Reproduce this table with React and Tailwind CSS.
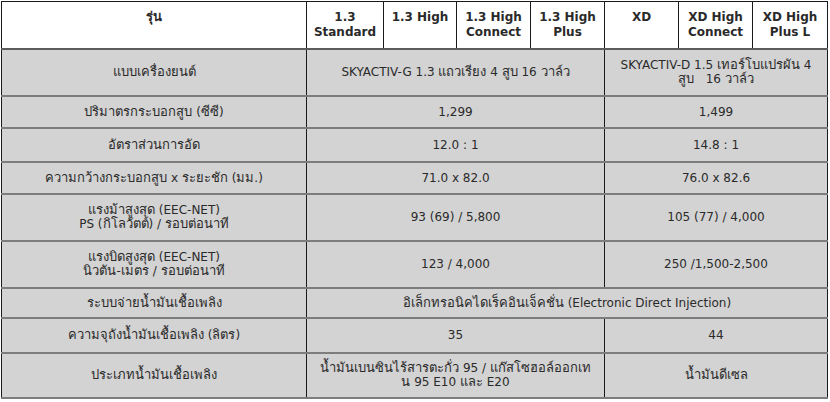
const models = [
  ["1.3", "Standard"],
  ["1.3 High"],
  ["1.3 High", "Connect"],
  ["1.3 High", "Plus"],
  ["XD"],
  ["XD High", "Connect"],
  ["XD High", "Plus L"],
];

const rows = [
  {
    label: ["แบบเครื่องยนต์"],
    h: "h-[47px]",
    g: ["SKYACTIV-G 1.3 แถวเรียง 4 สูบ 16 วาล์ว"],
    d: ["SKYACTIV-D 1.5 เทอร์โบแปรผัน 4", "สูบ\u00a0\u00a0 16 วาล์ว"],
  },
  { label: ["ปริมาตรกระบอกสูบ (ซีซี)"], h: "h-[32px]", g: ["1,299"], d: ["1,499"] },
  { label: ["อัตราส่วนการอัด"], h: "h-[34px]", g: ["12.0 : 1"], d: ["14.8 : 1"] },
  { label: ["ความกว้างกระบอกสูบ x ระยะชัก (มม.)"], h: "h-[32px]", g: ["71.0 x 82.0"], d: ["76.0 x 82.6"] },
  {
    label: ["แรงม้าสูงสุด (EEC-NET)", "PS (กิโลวัตต์) / รอบต่อนาที"],
    h: "h-[47px]",
    g: ["93 (69) / 5,800"],
    d: ["105 (77) / 4,000"],
  },
  {
    label: ["แรงบิดสูงสุด (EEC-NET)", "นิวตัน-เมตร / รอบต่อนาที"],
    h: "h-[47px]",
    g: ["123 / 4,000"],
    d: ["250 /1,500-2,500"],
  },
  {
    label: ["ระบบจ่ายน้ำมันเชื้อเพลิง"],
    h: "h-[30px]",
    all: ["อิเล็กทรอนิคไดเร็คอินเจ็คชั่น (Electronic Direct Injection)"],
  },
  { label: ["ความจุถังน้ำมันเชื้อเพลิง (ลิตร)"], h: "h-[35px]", g: ["35"], d: ["44"] },
  {
    label: ["ประเภทน้ำมันเชื้อเพลิง"],
    h: "h-[45px]",
    g: ["น้ำมันเบนซินไร้สารตะกั่ว 95 / แก๊สโซฮอล์ออกเท", "น 95 E10 และ E20"],
    d: ["น้ำมันดีเซล"],
  },
];

// Thai runs render in a smaller fallback face, so bump them up a bit
function Mixed({ text }) {
  const parts = text.split(/([\u0E00-\u0E7F]+)/);
  return parts.map((p, i) =>
    /[\u0E00-\u0E7F]/.test(p) ? (
      <span key={i} className="text-[13px] leading-[14px]">
        {p}
      </span>
    ) : (
      p
    )
  );
}

function Lines({ lines }) {
  return lines.map((l, i) => (
    <div key={i} className="whitespace-nowrap">
      <Mixed text={l} />
    </div>
  ));
}

const cell = "border-x border-x-[#1a1a1a] border-y-2 border-y-[#7d7d7d] text-center align-middle p-0";

export default function App() {
  return (
    <div className="w-[830px] h-[402px] bg-white pt-px pl-px">
      <table
        className="table-fixed border-collapse w-[826px] text-[12px] leading-[14px] text-[#2a2a2a]"
        style={{ fontFamily: '"DejaVu Sans", Tahoma, sans-serif' }}
      >
        <colgroup>
          <col className="w-[305px]" />
          <col className="w-[77px]" />
          <col className="w-[73px]" />
          <col className="w-[74px]" />
          <col className="w-[74px]" />
          <col className="w-[74px]" />
          <col className="w-[74px]" />
          <col className="w-[75px]" />
        </colgroup>
        <thead>
          <tr className="h-[47px] bg-white">
            <th className="border border-[#1a1a1a] border-b-2 border-b-[#5c5c5c] align-top pt-[8px] font-bold">
              <Mixed text="รุ่น" />
            </th>
            {models.map((m, i) => (
              <th
                key={i}
                className="border border-[#1a1a1a] border-b-2 border-b-[#5c5c5c] align-top pt-[8px] font-bold leading-[15px]"
              >
                <Lines lines={m} />
              </th>
            ))}
          </tr>
        </thead>
        <tbody className="bg-[#d3d3d3]">
          {rows.map((r, i) => (
            <tr key={i} className={r.h}>
              <td className={cell}>
                <Lines lines={r.label} />
              </td>
              {r.all ? (
                <td colSpan={7} className={cell}>
                  <Lines lines={r.all} />
                </td>
              ) : (
                <>
                  <td colSpan={4} className={cell}>
                    <Lines lines={r.g} />
                  </td>
                  <td colSpan={3} className={cell}>
                    <Lines lines={r.d} />
                  </td>
                </>
              )}
            </tr>
          ))}
        </tbody>
      </table>
    </div>
  );
}
